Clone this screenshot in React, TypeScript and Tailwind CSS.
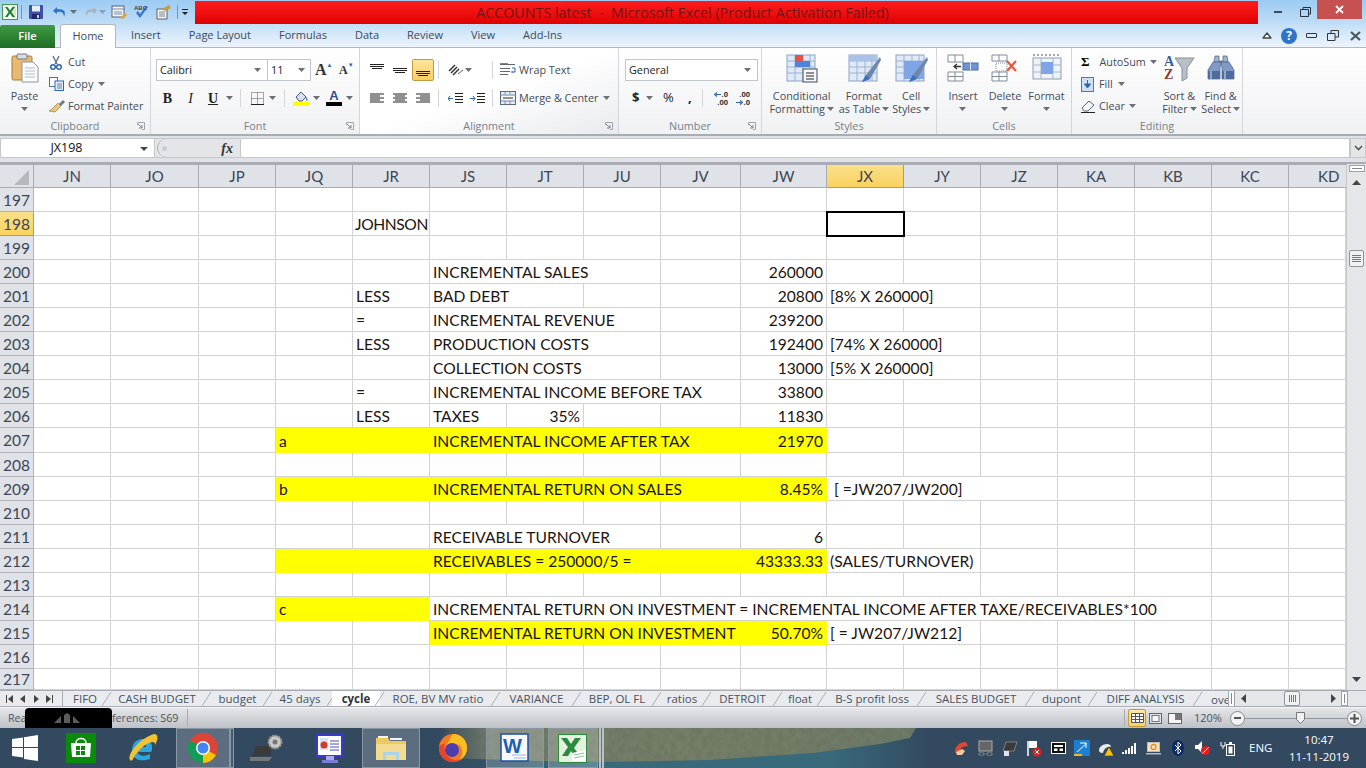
import type { ReactNode } from 'react'

type Cell = {
  col: string
  text?: string
  span?: number
  right?: boolean
  yellow?: boolean
  tight?: boolean
}

const columns = ['JN', 'JO', 'JP', 'JQ', 'JR', 'JS', 'JT', 'JU', 'JV', 'JW', 'JX', 'JY', 'JZ', 'KA', 'KB', 'KC', 'KD']
const gridCols =
  'grid grid-cols-[34px_77px_88px_77px_77px_77px_77px_77px_77px_80px_86px_77px_77px_77px_77px_77px_77px_57px]'

const spans: Record<number, string> = {
  1: '',
  2: 'col-span-2',
  3: 'col-span-3',
  4: 'col-span-4',
  5: 'col-span-5',
  10: 'col-span-10',
}

const sheet: Record<number, Cell[]> = {
  198: [{ col: 'JR', text: 'JOHNSON', tight: true }],
  200: [
    { col: 'JS', text: 'INCREMENTAL SALES', span: 3 },
    { col: 'JW', text: '260000', right: true },
  ],
  201: [
    { col: 'JR', text: 'LESS' },
    { col: 'JS', text: 'BAD DEBT', span: 2 },
    { col: 'JW', text: '20800', right: true },
    { col: 'JX', text: '[8% X 260000]', span: 2 },
  ],
  202: [
    { col: 'JR', text: '=' },
    { col: 'JS', text: 'INCREMENTAL REVENUE', span: 3 },
    { col: 'JW', text: '239200', right: true },
  ],
  203: [
    { col: 'JR', text: 'LESS' },
    { col: 'JS', text: 'PRODUCTION COSTS', span: 3 },
    { col: 'JW', text: '192400', right: true },
    { col: 'JX', text: '[74% X 260000]', span: 2 },
  ],
  204: [
    { col: 'JS', text: 'COLLECTION COSTS', span: 3 },
    { col: 'JW', text: '13000', right: true },
    { col: 'JX', text: '[5% X 260000]', span: 2 },
  ],
  205: [
    { col: 'JR', text: '=' },
    { col: 'JS', text: 'INCREMENTAL INCOME BEFORE TAX', span: 4 },
    { col: 'JW', text: '33800', right: true },
  ],
  206: [
    { col: 'JR', text: 'LESS' },
    { col: 'JS', text: 'TAXES' },
    { col: 'JT', text: '35%', right: true },
    { col: 'JW', text: '11830', right: true },
  ],
  207: [
    { col: 'JQ', text: 'a', yellow: true },
    { col: 'JR', yellow: true },
    { col: 'JS', text: 'INCREMENTAL INCOME AFTER TAX', span: 4, yellow: true },
    { col: 'JW', text: '21970', right: true, yellow: true },
  ],
  209: [
    { col: 'JQ', text: 'b', yellow: true },
    { col: 'JR', yellow: true },
    { col: 'JS', text: 'INCREMENTAL RETURN ON SALES', span: 4, yellow: true },
    { col: 'JW', text: '8.45%', right: true, yellow: true },
    { col: 'JX', text: '\u00a0[ =JW207/JW200]', span: 3 },
  ],
  211: [
    { col: 'JS', text: 'RECEIVABLE TURNOVER', span: 3 },
    { col: 'JW', text: '6', right: true },
  ],
  212: [
    { col: 'JQ', yellow: true },
    { col: 'JR', yellow: true },
    { col: 'JS', text: 'RECEIVABLES = 250000/5 =', span: 4, yellow: true },
    { col: 'JW', text: '43333.33', right: true, yellow: true },
    { col: 'JX', text: '(SALES/TURNOVER)', span: 2 },
  ],
  214: [
    { col: 'JQ', text: 'c', yellow: true },
    { col: 'JR', yellow: true },
    { col: 'JS', text: 'INCREMENTAL RETURN ON INVESTMENT = INCREMENTAL INCOME AFTER TAXE/RECEIVABLES*100', span: 10 },
  ],
  215: [
    { col: 'JS', text: 'INCREMENTAL RETURN ON INVESTMENT', span: 4, yellow: true },
    { col: 'JW', text: '50.70%', right: true, yellow: true },
    { col: 'JX', text: '[ = JW207/JW212]', span: 2 },
  ],
}

const rowNumbers = Array.from({ length: 21 }, (_, i) => 197 + i)

const sheetTabs = [
  { name: 'FIFO', w: 'w-[44px]' },
  { name: 'CASH BUDGET', w: 'w-[100px]' },
  { name: 'budget', w: 'w-[61px]' },
  { name: '45 days', w: 'w-[64px]' },
  { name: 'cycle', w: 'w-[48px]', active: true },
  { name: 'ROE, BV MV ratio', w: 'w-[116px]' },
  { name: 'VARIANCE', w: 'w-[81px]' },
  { name: 'BEP, OL FL', w: 'w-[80px]' },
  { name: 'ratios', w: 'w-[50px]' },
  { name: 'DETROIT', w: 'w-[71px]' },
  { name: 'float', w: 'w-[44px]' },
  { name: 'B-S profit loss', w: 'w-[100px]' },
  { name: 'SALES BUDGET', w: 'w-[108px]' },
  { name: 'dupont', w: 'w-[63px]' },
  { name: 'DIFF ANALYSIS', w: 'w-[105px]' },
]

function Caret({ className = '' }: { className?: string }) {
  return (
    <svg width="7" height="4" viewBox="0 0 7 4" className={`shrink-0 ${className}`}>
      <path d="M0 0h7L3.500 4z" fill="#6a7078" />
    </svg>
  )
}

function Lines({ kind }: { kind: 'left' | 'center' | 'right' }) {
  const short = kind === 'left' ? [0, 10] : kind === 'center' ? [2, 10] : [4, 10]
  const rows = [[0, 14], short, [0, 14], short, [0, 14]]
  return (
    <svg width="14" height="11" viewBox="0 0 14 11">
      {rows.map(([x, w], i) => (
        <rect key={i} x={x} y={i * 2 + 0.5} width={w} height="1" fill="#222" />
      ))}
    </svg>
  )
}

function VAlign({ pos }: { pos: number }) {
  return (
    <svg width="14" height="14" viewBox="0 0 14 14">
      {[0, 2, 4].map((y) => (
        <rect key={y} x={y === 4 ? 2 : 0} y={pos + y} width={y === 4 ? 10 : 14} height="1" fill="#222" />
      ))}
    </svg>
  )
}

function BigButton({ icon, lines, w }: { icon: ReactNode; lines: string[]; w: string }) {
  return (
    <div className={`flex flex-col items-center pt-[3px] ${w}`}>
      <div className="flex h-[34px] items-center justify-center">{icon}</div>
      <div className="mt-[4px] text-center leading-[13px] whitespace-nowrap">
        {lines.map((line, i) => (
          <div key={line} className="flex h-[13px] items-center justify-center gap-[2px]">
            {line}
            {i === 1 && line !== '' && <Caret />}
          </div>
        ))}
        {lines[1] === '' && (
          <div className="-mt-[8px] flex justify-center">
            <Caret />
          </div>
        )}
      </div>
    </div>
  )
}

function RibbonGroup({ label, w, launcher, shaded, children }: { label: string; w: string; launcher?: boolean; shaded?: boolean; children: ReactNode }) {
  return (
    <div
      className={`flex h-full shrink-0 flex-col border-r border-[#d3d6da] ${w} ${
        shaded ? 'bg-gradient-to-br from-white via-white to-[#e9ebee]' : ''
      }`}
    >
      <div className="h-[69px] overflow-hidden">{children}</div>
      <div className="relative flex h-[17px] items-center justify-center pt-[1px] text-[#76808c]">
        {label}
        {launcher && (
          <svg width="8" height="8" viewBox="0 0 8 8" className="absolute right-[5px] top-[5px]">
            <path d="M.5 3V.5H7.500V7.500H5" fill="none" stroke="#a0a5ab" />
            <path d="M1 2l4 4M5 3v3H2" fill="none" stroke="#7f868e" />
          </svg>
        )}
      </div>
    </div>
  )
}

function ExcelIcon() {
  return (
    <svg width="16" height="16" viewBox="0 0 16 16">
      <rect x=".5" y=".5" width="15" height="15" fill="#f5faf2" stroke="#3d9a4a" />
      <rect x="10" y="2" width="4" height="12" fill="#d6ead0" />
      <path d="M3 3h2.500L8 6.500 10.500 3H13L9.300 8 13 13h-2.500L8 9.500 5.500 13H3l3.700-5z" fill="#1f7a32" />
    </svg>
  )
}

function TitleBar() {
  return (
    <div className="flex h-[24px] bg-gradient-to-b from-[#9ccbf3] to-[#c0ddf6]">
      <div className="flex w-[195px] shrink-0 items-center pl-[2px]">
        <ExcelIcon />
        <div className="ml-[3px] h-[14px] w-px bg-[#7d93a8]" />
        <svg width="16" height="16" viewBox="0 0 16 16" className="ml-[6px]">
          <rect x="1" y="1" width="14" height="14" rx="1" fill="#3f4fa8" />
          <rect x="4" y="1.500" width="8" height="6" fill="#e6ecf8" />
          <rect x="4" y="10" width="8" height="5" fill="#20286a" />
          <rect x="9" y="11" width="2" height="3" fill="#cfd6e8" />
        </svg>
        <svg width="16" height="14" viewBox="0 0 16 14" className="ml-[8px]">
          <path d="M5 2L1 6l4 3V7c4-1 7 0 7 5 2-5 1-8-7-8z" fill="#2f71c4" />
        </svg>
        <Caret className="ml-[2px]" />
        <svg width="15" height="14" viewBox="0 0 16 14" className="ml-[6px]">
          <path d="M11 2l4 4-4 3V7C7 6 4 7 4 12 2 7 3 4 11 4z" fill="#a4b3bf" />
        </svg>
        <Caret className="ml-[1px] opacity-50" />
        <svg width="17" height="16" viewBox="0 0 17 16" className="ml-[5px]">
          <rect x="1" y="2" width="12" height="11" fill="#f3f5f8" stroke="#53617a" />
          <path d="M1 5h12M3 8h8M3 10h8" stroke="#7b8ba3" />
          <path d="M9 14l5-5 2 2-4 4z" fill="#d9a43b" />
        </svg>
        <svg width="17" height="16" viewBox="0 0 17 16" className="ml-[5px]">
          <path d="M3 9l4 5 8-11-2-1-6 8-2-3z" fill="#3c76c4" />
          <text x="1" y="6" fontSize="6" fontFamily="Liberation Sans, sans-serif" fontWeight="700" fill="#444">
            ABC
          </text>
        </svg>
        <svg width="17" height="16" viewBox="0 0 17 16" className="ml-[5px]">
          <rect x="2" y="5" width="10" height="10" fill="#f4f4f0" stroke="#5b6470" />
          <path d="M4 8h6M4 10h6M4 12h6" stroke="#7c8794" />
          <path d="M7 5l7-4 2 3-6 3z" fill="#c89a3a" />
        </svg>
        <div className="ml-[5px] h-[14px] w-px bg-[#7d93a8]" />
        <svg width="8" height="8" viewBox="0 0 8 8" className="ml-[3px]">
          <path d="M1 1h6v1H1zM1 4h6L4 7z" fill="#222" />
        </svg>
      </div>
      <div className="mt-px flex h-[23px] w-[1063px] shrink-0 items-center justify-center bg-gradient-to-b from-[#ff1b1b] to-[#df0000] pr-[88px] text-[14.300px] text-[#741515]">
        <span>ACCOUNTS latest &nbsp;-&nbsp; Microsoft Excel (Product Activation Failed)</span>
      </div>
      <div className="flex flex-1 items-start">
        <div className="ml-[16px] flex h-[24px] w-[10px] items-center">
          <div className="h-[2px] w-[8px] bg-[#3d4a59]" />
        </div>
        <div className="ml-[9px] flex h-[24px] w-[24px] items-center justify-center">
          <svg width="11" height="10" viewBox="0 0 11 10">
            <path d="M3 2V.5h7.500V7H8.500M.5 2.500h8V9.500h-8z" fill="none" stroke="#27323f" />
          </svg>
        </div>
        <div className="flex h-[19px] w-[45px] items-center justify-center bg-[#c75050]">
          <svg width="9" height="9" viewBox="0 0 9 9">
            <path d="M1 1l7 7M8 1L1 8" stroke="#fff" strokeWidth="1.800" />
          </svg>
        </div>
      </div>
    </div>
  )
}

function TabRow() {
  const tabs = ['Insert', 'Page Layout', 'Formulas', 'Data', 'Review', 'View', 'Add-Ins']
  return (
    <div className="flex h-[24px] border-b border-[#b4b8bd] bg-gradient-to-b from-[#c3dff8] to-[#edf4fb] text-[#3d4a5c]">
      <div className="mt-px flex h-[23px] w-[55px] items-center justify-center rounded-t-[2px] bg-gradient-to-b from-[#3f9a43] to-[#1f6e26] font-semibold text-white">
        File
      </div>
      <div className="ml-[5px] flex h-[24px] w-[56px] items-center justify-center rounded-t-[3px] border border-b-0 border-[#b4b8bd] bg-white">
        Home
      </div>
      <div className="ml-[1px] flex">
        {tabs.map((tab) => (
          <div key={tab} className="flex items-center px-[14px]">
            {tab}
          </div>
        ))}
      </div>
      <div className="ml-auto flex items-center pr-[5px]">
        <svg width="10" height="7" viewBox="0 0 10 7">
          <path d="M1 6h8L5 1z" fill="#fff" stroke="#444" strokeWidth="1.300" strokeLinejoin="round" />
        </svg>
        <div className="ml-[9px] flex h-[16px] w-[16px] items-center justify-center rounded-full bg-[#2f74c9] text-[12px] font-bold text-white">
          ?
        </div>
        <div className="ml-[9px] h-[5px] w-[11px] rounded-[1px] border border-[#333]" />
        <svg width="12" height="11" viewBox="0 0 12 11" className="ml-[10px]">
          <path d="M4 3V.5h7.500V7H8M.5 3.500h7.500V10.500H.5z" fill="none" stroke="#333" />
        </svg>
        <svg width="11" height="10" viewBox="0 0 11 10" className="ml-[11px]">
          <path d="M1 1l9 8M10 1L1 9" stroke="#4a5663" strokeWidth="2.200" />
        </svg>
      </div>
    </div>
  )
}

function ClipboardGroup() {
  return (
    <RibbonGroup label="Clipboard" w="w-[151px]" launcher>
      <div className="flex">
        <div className="flex w-[49px] flex-col items-center pt-[5px]">
          <svg width="28" height="30" viewBox="0 0 28 30">
            <rect x="1" y="3" width="20" height="24" rx="1.500" fill="#e8b96e" stroke="#a87a3a" />
            <rect x="6" y="1" width="10" height="5" rx="1" fill="#d9dde2" stroke="#6f7a86" />
            <path d="M11 9h11l5 5v15H11z" fill="#fbfcfd" stroke="#8a96a3" />
            <path d="M14 15h10M14 18h10M14 21h10M14 24h10" stroke="#b5bdc7" />
          </svg>
          <div className="mt-[6px] leading-[13px]">Paste</div>
          <Caret className="mt-[5px]" />
        </div>
        <div className="pt-[3px]">
          <div className="flex h-[22px] items-center gap-[5px]">
            <svg width="14" height="15" viewBox="0 0 14 15">
              <path d="M4 1l4 8M10 1L6 9" stroke="#687482" strokeWidth="1.400" />
              <circle cx="4" cy="12" r="2.300" fill="none" stroke="#2f64b1" strokeWidth="1.500" />
              <circle cx="10" cy="12" r="2.300" fill="none" stroke="#2f64b1" strokeWidth="1.500" />
            </svg>
            Cut
          </div>
          <div className="flex h-[22px] items-center gap-[4px]">
            <svg width="15" height="14" viewBox="0 0 15 14">
              <rect x=".5" y=".5" width="8" height="9" fill="#fff" stroke="#4f6f9f" />
              <rect x="6" y="4" width="8.500" height="9.500" fill="#e7effa" stroke="#2f64b1" />
              <path d="M8 7h5M8 9h5M8 11h5" stroke="#5a7fb5" />
            </svg>
            Copy <Caret className="ml-[1px]" />
          </div>
          <div className="flex h-[22px] items-center gap-[3px]">
            <svg width="16" height="14" viewBox="0 0 16 14">
              <path d="M9 4l3 3-6 6-6-1 3-2z" fill="#e6c677" stroke="#8a6f35" strokeWidth=".6" />
              <path d="M10 5l4-4 2 2-4 4z" fill="#6d7a88" />
            </svg>
            Format Painter
          </div>
        </div>
      </div>
    </RibbonGroup>
  )
}

function FontGroup() {
  return (
    <RibbonGroup label="Font" w="w-[209px]" launcher>
      <div className="flex h-[37px] items-start pl-[5px] pt-[11px]">
        <div className="flex h-[22px] w-[112px] items-center justify-between border border-[#c2c7cd] bg-white pl-[3px] pr-[6px] text-[#222]">
          Calibri <Caret />
        </div>
        <div className="flex h-[22px] w-[43px] items-center justify-between border border-l-0 border-[#c2c7cd] bg-white pl-[3px] pr-[5px] text-[#222]">
          11 <Caret />
        </div>
        <div className="ml-[4px] flex h-[22px] w-[18px] items-center font-['Liberation_Serif',serif] text-[16px] font-bold text-[#333]">
          A<span className="-mt-[10px] text-[6px] text-[#2f64b1]">▲</span>
        </div>
        <div className="ml-[6px] flex h-[22px] w-[16px] items-center font-['Liberation_Serif',serif] text-[12px] font-bold text-[#333]">
          A<span className="-mt-[9px] text-[6px] text-[#2f64b1]">▼</span>
        </div>
      </div>
      <div className="mt-[2px] flex h-[22px] items-center pl-[5px] font-['Liberation_Serif',serif] text-[14px] text-[#222]">
        <span className="w-[23px] text-center font-bold">B</span>
        <span className="w-[23px] text-center italic">I</span>
        <span className="w-[22px] text-center font-bold underline">U</span>
        <Caret className="ml-[2px]" />
        <div className="ml-[7px] h-[18px] w-px bg-[#d3d6da]" />
        <svg width="13" height="13" viewBox="0 0 13 13" className="ml-[10px]">
          <path d="M.5.5h12v12H.5zM6.500.5v12M.5 6.500h12" fill="none" stroke="#555" strokeDasharray="1 1" />
          <path d="M0 12.500h13" stroke="#222" />
        </svg>
        <Caret className="ml-[5px]" />
        <div className="ml-[8px] h-[18px] w-px bg-[#d3d6da]" />
        <svg width="16" height="15" viewBox="0 0 16 15" className="ml-[8px]">
          <path d="M3 6l5-5 5 5-4 4H6z" fill="#d7e2ee" stroke="#44586f" />
          <path d="M13 6c2 2 2 3 1 4-1-1-1-2-1-4z" fill="#2f74c9" />
          <rect y="11" width="16" height="4" fill="#ffff00" />
        </svg>
        <Caret className="ml-[4px]" />
        <div className="ml-[6px] flex w-[16px] flex-col items-center font-['Liberation_Sans',sans-serif] text-[13px] leading-[11px] font-bold text-[#2b4f8c]">
          A
          <div className="mt-[1px] h-[4px] w-[16px] bg-black" />
        </div>
        <Caret className="ml-[4px]" />
      </div>
    </RibbonGroup>
  )
}

function AlignmentGroup() {
  return (
    <RibbonGroup label="Alignment" w="w-[259px]" launcher shaded>
      <div className="flex h-[37px] items-start pl-[9px] pt-[11px]">
        <div className="flex h-[22px] w-[15px] items-center justify-center">
          <VAlign pos={1} />
        </div>
        <div className="ml-[8px] flex h-[22px] w-[15px] items-center justify-center">
          <VAlign pos={5} />
        </div>
        <div className="ml-[5px] flex h-[22px] w-[22px] items-center justify-center rounded-[2px] border border-[#c29b3e] bg-gradient-to-b from-[#fde49a] to-[#f9cf62]">
          <VAlign pos={8} />
        </div>
        <div className="ml-[4px] mt-[2px] h-[18px] w-px bg-[#d3d6da]" />
        <div className="ml-[9px] flex h-[22px] w-[25px] items-center gap-[1px]">
          <svg width="16" height="14" viewBox="0 0 16 14">
            <path d="M1 8l6-6M3 10l6-6M5 12l6-6" stroke="#333" strokeWidth="1.500" />
            <path d="M10 11l5-4" stroke="#2f64b1" />
          </svg>
          <Caret />
        </div>
        <div className="ml-[19px] mt-[2px] h-[18px] w-px bg-[#d3d6da]" />
        <div className="ml-[7px] flex h-[22px] items-center gap-[3px]">
          <svg width="16" height="14" viewBox="0 0 16 14">
            <path d="M0 1.500h15M0 5.500h10M0 8.500h10M0 11.500h8" stroke="#5f6772" />
            <path d="M12 5h3v4h-3M13 9l-2 0" fill="none" stroke="#2f64b1" />
            <path d="M0 .5h8" stroke="#b97b2e" />
          </svg>
          Wrap Text
        </div>
      </div>
      <div className="mt-[2px] flex h-[22px] items-center pl-[9px]">
        <div className="flex w-[15px] justify-center">
          <Lines kind="left" />
        </div>
        <div className="ml-[8px] flex w-[15px] justify-center">
          <Lines kind="center" />
        </div>
        <div className="ml-[8px] flex w-[15px] justify-center">
          <Lines kind="right" />
        </div>
        <div className="ml-[8px] h-[18px] w-px bg-[#d3d6da]" />
        <svg width="15" height="11" viewBox="0 0 15 11" className="ml-[9px]">
          <path d="M0 5.500h5M2 3l-2 2.500L2 8" fill="none" stroke="#2f64b1" />
          <path d="M7 .5h8M7 3.500h8M7 6.500h8M7 9.500h8" stroke="#222" />
        </svg>
        <svg width="15" height="11" viewBox="0 0 15 11" className="ml-[7px]">
          <path d="M0 5.500h5M3 3l2 2.500L3 8" fill="none" stroke="#2f64b1" />
          <path d="M7 .5h8M7 3.500h8M7 6.500h8M7 9.500h8" stroke="#222" />
        </svg>
        <div className="ml-[7px] h-[18px] w-px bg-[#d3d6da]" />
        <div className="ml-[7px] flex items-center gap-[3px] whitespace-nowrap">
          <svg width="16" height="14" viewBox="0 0 16 14">
            <rect x=".5" y=".5" width="15" height="13" fill="#e4ecf6" stroke="#5a6b80" />
            <path d="M.5 4h15M.5 10h15M5 .5v3M10 .5v3M5 10v3M10 10v3" stroke="#7d90a8" />
            <rect x="2" y="5" width="12" height="4" fill="#fff" />
            <path d="M3 7h10" stroke="#222" />
          </svg>
          Merge &amp; Center <Caret className="ml-[2px]" />
        </div>
      </div>
    </RibbonGroup>
  )
}

function NumberGroup() {
  return (
    <RibbonGroup label="Number" w="w-[143px]" launcher>
      <div className="flex h-[37px] items-start pl-[6px] pt-[11px]">
        <div className="flex h-[22px] w-[133px] items-center justify-between border border-[#c2c7cd] bg-white pl-[3px] pr-[6px] text-[#222]">
          General <Caret />
        </div>
      </div>
      <div className="mt-[2px] flex h-[22px] items-center pl-[13px] text-[#222]">
        <span className="w-[9px] text-[13px] font-bold">$</span>
        <Caret className="ml-[5px]" />
        <span className="ml-[10px] w-[13px] text-[13px]">%</span>
        <span className="ml-[12px] w-[4px] text-[13px] font-bold">,</span>
        <div className="ml-[10px] h-[18px] w-px bg-[#d3d6da]" />
        <div className="ml-[8px] flex w-[17px] flex-col items-end text-[7.500px] leading-[8px] font-bold text-[#333]">
          <div className="flex items-center gap-[1px]">
            <svg width="7" height="5" viewBox="0 0 7 5">
              <path d="M7 2.500H2M3 .5L.5 2.500 3 4.500" fill="none" stroke="#2f64b1" strokeWidth="1.200" />
            </svg>
            .0
          </div>
          <div>.00</div>
        </div>
        <div className="ml-[5px] flex w-[17px] flex-col items-end text-[7.500px] leading-[8px] font-bold text-[#333]">
          <div>.00</div>
          <div className="flex items-center gap-[1px]">
            <svg width="7" height="5" viewBox="0 0 7 5">
              <path d="M0 2.500h5M4 .5l2.500 2L4 4.500" fill="none" stroke="#2f64b1" strokeWidth="1.200" />
            </svg>
            .0
          </div>
        </div>
      </div>
    </RibbonGroup>
  )
}

function TableIcon({ children }: { children?: ReactNode }) {
  return (
    <svg width="34" height="30" viewBox="0 0 34 30">
      <rect x="2" y="2" width="28" height="26" fill="#dfe9f7" stroke="#8ca3c4" />
      <path d="M2 8h28M2 14h28M2 20h28M10 2v26M18 2v26M25 2v26" stroke="#9db3d1" />
      {children}
    </svg>
  )
}

function StylesGroup() {
  return (
    <RibbonGroup label="Styles" w="w-[175px]">
      <div className="flex">
        <BigButton
          w="w-[80px]"
          lines={['Conditional', 'Formatting']}
          icon={
            <TableIcon>
              <rect x="10" y="2" width="8" height="12" fill="#e0544a" />
              <rect x="10" y="8" width="15" height="6" fill="#4f84d8" />
              <rect x="18" y="16" width="14" height="13" fill="#f6f8fb" stroke="#3d4b5e" />
              <path d="M21 20h8M21 23h8M21 26h8" stroke="#222" />
            </TableIcon>
          }
        />
        <BigButton
          w="w-[45px]"
          lines={['Format', 'as Table']}
          icon={
            <TableIcon>
              <rect x="2" y="2" width="28" height="6" fill="#a9c3e8" />
              <path d="M33 4L19 22l-4 7 8-3L34 7z" fill="#6f87a8" />
              <path d="M19 22l-4 7 8-3z" fill="#3a6fc2" />
            </TableIcon>
          }
        />
        <BigButton
          w="w-[50px]"
          lines={['Cell', 'Styles']}
          icon={
            <TableIcon>
              <rect x="10" y="8" width="20" height="18" fill="#7fa5e6" />
              <path d="M33 4L19 22l-4 7 8-3L34 7z" fill="#6f87a8" />
              <path d="M19 22l-4 7 8-3z" fill="#3a6fc2" />
            </TableIcon>
          }
        />
      </div>
    </RibbonGroup>
  )
}

function CellsGroup() {
  return (
    <RibbonGroup label="Cells" w="w-[135px]">
      <div className="flex pl-[5px]">
        <BigButton
          w="w-[42px]"
          lines={['Insert', '']}
          icon={
            <svg width="32" height="30" viewBox="0 0 32 30">
              <path d="M1 2h15v7H1zM1 9h0M1 19h15v9H1zM8 2v7M1 23.500h15M8 19v9" fill="#fff" stroke="#7e8c9e" />
              <rect x="16" y="10" width="15" height="7" fill="#6f94d6" stroke="#456ea8" />
              <path d="M23.500 10v7" stroke="#dce6f6" />
              <path d="M14 13.500H7M10 11l-3 2.500L10 16" fill="none" stroke="#333" strokeWidth="1.300" />
            </svg>
          }
        />
        <BigButton
          w="w-[42px]"
          lines={['Delete', '']}
          icon={
            <svg width="28" height="30" viewBox="0 0 28 30">
              <path d="M1 2h15v6H1zM1 19h15v9H1zM8 2v6M1 23.500h15M8 19v9" fill="#fff" stroke="#7e8c9e" />
              <rect x="5" y="10" width="11" height="8" fill="none" stroke="#7e8c9e" strokeDasharray="1 1" />
              <path d="M16 8l9 10M25 8l-9 10" stroke="#e8573f" strokeWidth="2.200" />
            </svg>
          }
        />
        <BigButton
          w="w-[41px]"
          lines={['Format', '']}
          icon={
            <svg width="32" height="30" viewBox="0 0 32 30">
              <path d="M2 2h28" stroke="#555" strokeDasharray="2 2" />
              <rect x="2" y="5" width="28" height="21" fill="#eef3fa" stroke="#8f9db0" />
              <path d="M2 12h28M2 19h28M10 5v21M22 5v21" stroke="#a8b5c5" />
              <rect x="10" y="9" width="12" height="12" fill="#7fa5e6" />
            </svg>
          }
        />
      </div>
    </RibbonGroup>
  )
}

function EditingGroup() {
  return (
    <RibbonGroup label="Editing" w="w-[171px]">
      <div className="flex">
        <div className="w-[88px] pl-[9px] pt-[3px]">
          <div className="flex h-[22px] items-center gap-[10px]">
            <span className="font-['Liberation_Serif',serif] text-[13px] font-bold text-black">Σ</span>
            <span className="flex items-center gap-[4px] whitespace-nowrap">
              AutoSum <Caret />
            </span>
          </div>
          <div className="flex h-[22px] items-center gap-[5px]">
            <svg width="13" height="15" viewBox="0 0 13 15">
              <rect x=".5" y=".5" width="12" height="14" fill="#cfe0f5" stroke="#4c78b5" />
              <path d="M6.500 3v5M3.500 7h6l-3 4z" fill="#2f64b1" stroke="#2f64b1" />
            </svg>
            Fill <Caret />
          </div>
          <div className="flex h-[22px] items-center gap-[4px]">
            <svg width="14" height="13" viewBox="0 0 14 13">
              <path d="M1 8l7-7 5 4-6 6H3z" fill="#f4f6f8" stroke="#5a6675" />
              <path d="M0 12.500h14" stroke="#222" />
            </svg>
            Clear <Caret />
          </div>
        </div>
        <BigButton
          w="w-[40px]"
          lines={['Sort &', 'Filter']}
          icon={
            <svg width="32" height="30" viewBox="0 0 32 30">
              <path d="M12 5h19l-7 10v10l-5 3V15z" fill="#b9bfc6" stroke="#8a9097" />
              <text x="1" y="13" fontSize="14" fontWeight="700" fontFamily="Liberation Serif, serif" fill="#3a5fa8">
                A
              </text>
              <text x="1" y="26" fontSize="14" fontWeight="700" fontFamily="Liberation Serif, serif" fill="#8a3b34">
                Z
              </text>
            </svg>
          }
        />
        <BigButton
          w="w-[43px]"
          lines={['Find &', 'Select']}
          icon={
            <svg width="28" height="28" viewBox="0 0 28 28">
              <path d="M8 2h4v5h4V2h4l1 6H7z" fill="#9db3d4" stroke="#4a5f80" strokeWidth=".7" />
              <path d="M6 8h8l-1 6v11H1v-9zM22 8h-8l1 6v11h12v-9z" fill="#7f9ac4" stroke="#4a5f80" strokeWidth=".7" />
              <rect x="1" y="17" width="12" height="8" fill="#4f6c9c" />
              <rect x="15" y="17" width="12" height="8" fill="#4f6c9c" />
              <path d="M4 17v8M18 17v8" stroke="#a9bddb" strokeWidth="1.500" />
            </svg>
          }
        />
      </div>
    </RibbonGroup>
  )
}

function Ribbon() {
  return (
    <div className="flex h-[88px] border-b-2 border-[#a9adb3] bg-gradient-to-b from-white to-[#f0f1f3] text-[10.800px]">
      <ClipboardGroup />
      <FontGroup />
      <AlignmentGroup />
      <NumberGroup />
      <StylesGroup />
      <CellsGroup />
      <EditingGroup />
    </div>
  )
}

function FormulaBar() {
  return (
    <div className="flex h-[28px] flex-col border-b-2 border-[#a9adb3] bg-[#dfe2e6]">
      <div className="mt-[2px] flex h-[20px] bg-white">
        <div className="relative flex w-[155px] items-center justify-center border border-[#c4c8cd] pr-[22px] text-[12.500px] text-[#111]">
          JX198
          <svg width="8" height="4" viewBox="0 0 8 4" className="absolute right-[6px] top-[8px]">
            <path d="M0 0h8L4 4z" fill="#444" />
          </svg>
        </div>
        <div className="flex w-[85px] items-center justify-between border-y border-[#c4c8cd] bg-[#e3e5e8] pl-[2px] pr-[7px]">
          <div className="flex h-[18px] w-[14px] items-center justify-center rounded-l-full border-l border-[#a9adb3]">
            <div className="h-[5px] w-[5px] rounded-full bg-[#c8ccd1]" />
          </div>
          <span className="font-['Liberation_Serif',serif] text-[14px] font-bold text-[#333] italic">fx</span>
        </div>
        <div className="flex-1 border border-[#c4c8cd]" />
        <div className="flex w-[16px] items-center justify-center border border-[#c4c8cd] bg-[#e3e5e8]">
          <svg width="9" height="6" viewBox="0 0 9 6">
            <path d="M1 1l3.500 3.500L8 1" fill="none" stroke="#555" strokeWidth="1.600" />
          </svg>
        </div>
      </div>
    </div>
  )
}

function SheetRow({ row }: { row: number }) {
  const cells = sheet[row] ?? []
  const out: ReactNode[] = []
  const selectedRow = row === 198
  let i = 0
  while (i < columns.length) {
    const col = columns[i]
    const cell = cells.find((c) => c.col === col)
    const span = cell?.span ?? 1
    const selected = selectedRow && col === 'JX'
    out.push(
      <div
        key={col}
        className={`flex items-center whitespace-nowrap ${spans[span]} ${
          cell?.yellow ? 'bg-[#ffff00] pr-[4px]' : 'border-r border-b border-[#d4d4d4] pr-[3px]'
        } ${cell?.right ? 'justify-end' : ''} ${cell?.tight ? 'pl-[2px] tracking-[-0.4px]' : 'pl-[3px]'} ${
          selected ? 'relative z-10 outline-2 -outline-offset-1 outline-black' : ''
        }`}
      >
        {cell?.text}
      </div>,
    )
    i += span
  }
  return (
    <div className={`${gridCols} ${row === 207 ? 'h-[25px]' : row === 217 ? 'h-[21px]' : 'h-[24px]'}`}>
      <div
        className={`flex items-center justify-center border-r border-b text-[15.500px] text-[#3c4656] ${
          selectedRow
            ? 'border-[#c29b3e] bg-gradient-to-b from-[#fbe08a] to-[#f9d25e]'
            : 'border-[#b0b4ba] bg-[#dfe2e7]'
        }`}
      >
        {row}
      </div>
      {out}
    </div>
  )
}

function Grid() {
  return (
    <div className="flex h-[526px] font-['Lato',sans-serif] text-[15.600px] leading-[18px] text-[#1c1410]">
      <div className="w-[1346px] overflow-hidden">
        <div className={`${gridCols} h-[24px] border-t border-[#a9adb3] text-[15px] text-[#3c4656]`}>
          <div className="flex items-end justify-end border-r border-b border-[#a9adb3] bg-[#dfe2e7] p-[1px]">
            <svg width="15" height="15" viewBox="0 0 15 15" className="mb-[1px] mr-[3px]">
              <path d="M15 0v15H0z" fill="#b5b9be" />
            </svg>
          </div>
          {columns.map((col) => (
            <div
              key={col}
              className={`flex items-center border-r border-b ${
                col === 'KD' ? 'justify-start border-r-0 pl-[29px]' : 'justify-center'
              } ${
                col === 'JX'
                  ? 'border-[#c29b3e] bg-gradient-to-b from-[#fbe08a] to-[#f9d25e]'
                  : 'border-[#a9adb3] bg-[#dfe2e7]'
              }`}
            >
              {col}
            </div>
          ))}
        </div>
        {rowNumbers.map((row) => (
          <SheetRow key={row} row={row} />
        ))}
      </div>
      <div className="flex w-[20px] flex-col items-center border-l border-[#c4c8cd] bg-[#e4e6ea]">
        <div className="mt-px flex h-[7px] w-[16px] items-center justify-center border border-[#9aa0a7] bg-white">
          <div className="h-px w-[10px] bg-[#888]" />
        </div>
        <svg width="9" height="5" viewBox="0 0 9 5" className="mt-[8px]">
          <path d="M0 5h9L4.500 0z" fill="#444" />
        </svg>
        <div className="mt-[65px] flex h-[17px] w-[15px] flex-col justify-center gap-[1px] rounded-[2px] border border-[#8f959c] bg-[#eff1f3] px-[2px]">
          {[0, 1, 2, 3].map((n) => (
            <div key={n} className="h-px bg-[#777]" />
          ))}
        </div>
        <svg width="9" height="5" viewBox="0 0 9 5" className="mb-[8px] mt-auto">
          <path d="M0 0h9L4.500 5z" fill="#444" />
        </svg>
      </div>
    </div>
  )
}

function SheetTabs() {
  return (
    <div className="flex h-[17px] border-y border-[#a9adb3] bg-[#e9ebef] text-[11.500px] text-[#48525e]">
      <div className="flex w-[63px] shrink-0 items-center gap-[6px] border-r border-[#a9adb3] pl-[6px] text-[#444]">
        <svg width="7" height="8" viewBox="0 0 7 8">
          <path d="M0 0h1v8H0zM7 0v8L2 4z" fill="#444" />
        </svg>
        <svg width="6" height="8" viewBox="0 0 6 8" className="ml-[1px]">
          <path d="M5 0v8L0 4z" fill="#444" />
        </svg>
        <svg width="6" height="8" viewBox="0 0 6 8" className="ml-[2px]">
          <path d="M0 0v8l5-4z" fill="#444" />
        </svg>
        <svg width="7" height="8" viewBox="0 0 7 8">
          <path d="M6 0h1v8H6zM0 0v8l5-4z" fill="#444" />
        </svg>
      </div>
      {sheetTabs.map((tab) => (
        <div
          key={tab.name}
          className={`relative flex shrink-0 items-center justify-center whitespace-nowrap ${tab.w} ${
            tab.active ? 'bg-white font-bold text-[#333]' : ''
          }`}
        >
          {tab.name}
          <svg width="10" height="15" viewBox="0 0 10 15" className="absolute right-[-5px] top-0">
            <path d="M0 15L9 1" stroke="#a9adb3" />
          </svg>
        </div>
      ))}
      <div className="w-[30px] shrink-0 overflow-hidden whitespace-nowrap pl-[13px]">ove</div>
      <div className="flex flex-1 items-center border-l border-[#a9adb3] bg-[#e4e6ea]">
        <div className="flex h-[15px] w-[6px] items-center justify-center border-r border-[#9aa0a7] bg-white">
          <div className="h-[11px] w-px bg-[#888]" />
        </div>
        <svg width="5" height="9" viewBox="0 0 5 9" className="ml-[6px]">
          <path d="M5 0v9L0 4.500z" fill="#444" />
        </svg>
        <div className="ml-[38px] flex h-[15px] w-[16px] items-center justify-center gap-[1px] rounded-[2px] border border-[#8f959c] bg-[#eff1f3]">
          {[0, 1, 2, 3].map((n) => (
            <div key={n} className="h-[7px] w-px bg-[#777]" />
          ))}
        </div>
        <svg width="5" height="9" viewBox="0 0 5 9" className="ml-[31px]">
          <path d="M0 0v9l5-4.500z" fill="#444" />
        </svg>
        <div className="ml-[5px] flex h-[15px] w-[7px] items-center justify-center border border-[#9aa0a7] bg-white">
          <div className="h-[9px] w-px bg-[#888]" />
        </div>
      </div>
    </div>
  )
}

function StatusBar() {
  return (
    <div className="flex h-[21px] items-center border-t border-[#f3f4f6] bg-gradient-to-b from-[#e4e6e9] to-[#bec1c6] text-[10.700px] text-[#4c5560]">
      <span className="ml-[8px] w-[17px]">Rea</span>
      <div className="flex h-[20px] w-[87px] items-center justify-center gap-[2px] rounded-t-[4px] bg-black">
        <svg width="30" height="10" viewBox="0 0 30 10">
          <path d="M0 10L7 3v7zM10 10V2l3-2 3 2v8zM19 3l7 7h-7z" fill="#5c5c5c" />
        </svg>
      </div>
      <span>ferences: S69</span>
      <div className="ml-[9px] h-[18px] w-px bg-[#a9adb3]" />
      <div className="ml-auto flex items-center">
        <div className="mr-[3px] h-[18px] w-px bg-[#a9adb3]" />
        <div className="flex h-[18px] w-[18px] items-center justify-center rounded-[2px] border border-[#c29b3e] bg-gradient-to-b from-[#fde9ab] to-[#f9d25e]">
          <svg width="13" height="10" viewBox="0 0 13 10">
            <path d="M.5.5h12v9H.5zM.5 3.500h12M.5 6.500h12M4.500.5v9M8.500.5v9" fill="#fff" stroke="#555" />
          </svg>
        </div>
        <svg width="13" height="11" viewBox="0 0 13 11" className="ml-[3px]">
          <rect x=".5" y=".5" width="12" height="10" fill="#dfe2e6" stroke="#666" />
          <rect x="3" y="2.500" width="7" height="6" fill="#f4f5f7" stroke="#777" />
        </svg>
        <svg width="14" height="11" viewBox="0 0 14 11" className="ml-[6px]">
          <rect x=".5" y=".5" width="13" height="10" fill="#f4f5f7" stroke="#666" />
          <rect x="7" y="1" width="6" height="6" fill="#777" />
        </svg>
        <span className="ml-[12px] w-[28px] text-[11px]">120%</span>
        <div className="ml-[8px] flex h-[15px] w-[15px] items-center justify-center rounded-full border border-[#888] bg-[#f2f3f5]">
          <div className="h-[2px] w-[7px] bg-[#555]" />
        </div>
        <div className="relative h-px w-[102px] bg-[#8f959c]">
          <svg width="9" height="12" viewBox="0 0 9 12" className="absolute left-[51px] top-[-6px]">
            <path d="M.5.5h8v7L4.500 11.500.5 7.500z" fill="#eff1f3" stroke="#777" />
          </svg>
        </div>
        <div className="mr-[4px] flex h-[15px] w-[15px] items-center justify-center rounded-full border border-[#888] bg-[#f2f3f5]">
          <svg width="9" height="9" viewBox="0 0 9 9">
            <path d="M0 4.500h9M4.500 0v9" stroke="#555" strokeWidth="2" />
          </svg>
        </div>
      </div>
    </div>
  )
}

function TaskButton({ w, active, children }: { w: string; active?: boolean; children: ReactNode }) {
  return (
    <div
      className={`flex h-[40px] shrink-0 items-center justify-center ${w} ${
        active ? 'border border-[#8a98a4] bg-white/20' : ''
      }`}
    >
      {children}
    </div>
  )
}

function Taskbar() {
  return (
    <div className="relative flex h-[40px] items-center bg-[#33495f] text-white">
      <svg width="490" height="40" viewBox="0 0 490 40" className="absolute left-[440px] top-0">
        <defs>
          <linearGradient id="sea" x1="0" y1="0" x2="1" y2="0">
            <stop offset="0" stopColor="#33495f" />
            <stop offset="0.3" stopColor="#376a7c" />
            <stop offset="0.8" stopColor="#39697a" />
            <stop offset="1" stopColor="#33495f" />
          </linearGradient>
          <linearGradient id="land" x1="0" y1="0" x2="1" y2="0">
            <stop offset="0" stopColor="#33495f" />
            <stop offset="0.1" stopColor="#6e7a6c" />
            <stop offset="0.5" stopColor="#757f68" />
            <stop offset="0.96" stopColor="#6e7b68" />
            <stop offset="1" stopColor="#4a6066" />
          </linearGradient>
          <filter id="rough">
            <feTurbulence type="fractalNoise" baseFrequency="0.16" numOctaves="2" seed="4" />
            <feColorMatrix values="0 0 0 0 0.12  0 0 0 0 0.13  0 0 0 0 0.08  0 0 0 0.7 -0.2" />
          </filter>
        </defs>
        <rect width="490" height="40" fill="url(#land)" />
        <rect x="50" width="440" height="40" filter="url(#rough)" />
        <path d="M0 30L100 33 166 34 270 32 373 25 440 16 470 10 476 0H490V40H0z" fill="url(#sea)" />
      </svg>

      <div className="relative flex w-[600px] shrink-0 items-center">
        <TaskButton w="w-[50px]">
          <svg width="26" height="26" viewBox="0 0 26 26">
            <path d="M0 4l11-1.500V12H0zM12 2.300L26 0v12H12zM0 13h11v9.500L0 21zM12 13h14v13l-14-2z" fill="#fff" />
          </svg>
        </TaskButton>
        <TaskButton w="w-[62px]">
          <svg width="30" height="30" viewBox="0 0 30 30">
            <rect width="30" height="30" fill="#0a8a0a" />
            <path d="M5 10h20l-1 14H6z" fill="#fff" />
            <path d="M10 10c0-6 10-6 10 0" fill="none" stroke="#fff" strokeWidth="1.500" />
            <path d="M10 13h4v4h-4zM15 13h4v4h-4zM10 18h4v4h-4zM15 18h4v4h-4z" fill="#0a8a0a" />
          </svg>
        </TaskButton>
        <TaskButton w="w-[62px]">
          <svg width="32" height="32" viewBox="0 0 32 32">
            <path d="M24 20H11c0 4 6 5 12 2v5c-9 3-18 1-18-8 0-10 7-12 11-12 6 0 10 4 9 11zM19 15c0-3-2-4-4-4s-3 1-4 4z" fill="#2aa7e0" />
            <path d="M3 28C0 22 12 7 27 2c4 0 5 4 1 11C29 6 14 12 6 27c-1 2-2 2-3 1z" fill="#f2c230" />
          </svg>
        </TaskButton>
        <div className="ml-[2px] flex">
          <TaskButton w="w-[54px]" active>
            <svg width="30" height="30" viewBox="0 0 30 30">
              <circle cx="15" cy="15" r="15" fill="#db4437" />
              <path d="M15 15L28 22A15 15 0 0 1 15 30z" fill="#f4c20d" />
              <path d="M15 15L15 30A15 15 0 0 1 2 7.500z" fill="#0f9d58" />
              <circle cx="15" cy="15" r="7" fill="#fff" />
              <circle cx="15" cy="15" r="5.500" fill="#4285f4" />
            </svg>
          </TaskButton>
          <div className="h-[40px] w-[4px] border border-[#8a98a4] bg-white/10" />
        </div>
        <TaskButton w="w-[66px]">
          <svg width="34" height="28" viewBox="0 0 34 28">
            <path d="M6 12h16l-2 10H2z" fill="#3b3b3b" />
            <path d="M0 23h22l-3 4H0z" fill="#777" />
            <circle cx="25" cy="8" r="6.500" fill="#c9c9c9" stroke="#8c8c8c" strokeWidth="2" strokeDasharray="2 1" />
            <circle cx="25" cy="8" r="2.500" fill="#777" />
          </svg>
        </TaskButton>
        <div className="ml-[15px]">
          <TaskButton w="w-[30px]">
            <svg width="28" height="31" viewBox="0 0 28 31">
              <rect x="1" y="2" width="25" height="21" fill="#fff" stroke="#3a3ad0" strokeWidth="2" />
              <rect x="4" y="5" width="8" height="12" fill="#d9e2f4" />
              <circle cx="8" cy="12" r="3.500" fill="#d83a26" />
              <path d="M14 8h9M14 11h9M14 14h9M14 17h9" stroke="#4a4ac0" />
              <rect x="10" y="23" width="8" height="4" fill="#a9a9ea" />
              <rect x="6" y="27" width="16" height="3" fill="#7b7bdb" />
            </svg>
          </TaskButton>
        </div>
        <div className="ml-[17px]">
          <TaskButton w="w-[58px]" active>
            <svg width="32" height="26" viewBox="0 0 32 26">
              <path d="M1 3h12l2 3h16v4H1z" fill="#eec960" />
              <path d="M3 2h10M15 4h12" stroke="#f4f4f4" strokeWidth="2" />
              <path d="M1 9h30v16H1z" fill="#f3dc92" />
              <path d="M8 17h16v8h-3v-5H11v5H8z" fill="#a9d4ea" />
            </svg>
          </TaskButton>
        </div>
        <div className="ml-[18px]">
          <TaskButton w="w-[30px]">
            <svg width="30" height="30" viewBox="0 0 30 30">
              <circle cx="15" cy="15" r="14" fill="#f57a1f" />
              <path d="M15 1c8 0 14 6 14 14 0 5-3 10-8 12 4-4 4-9 2-13-2-3-5-4-8-3-4 1-5 5-4 8-3-2-3-8 0-11 1-3 2-5 4-7z" fill="#fbbf24" />
              <circle cx="14" cy="17" r="7" fill="#4b3fb0" />
              <path d="M1 15c0 8 6 14 14 14 3 0 6-1 8-3-6 3-14 0-16-8-1-3-1-5 0-7-3 0-6 1-6 4z" fill="#e8432d" />
            </svg>
          </TaskButton>
        </div>
        <div className="ml-[18px]">
          <TaskButton w="w-[58px]" active>
            <svg width="30" height="30" viewBox="0 0 30 30">
              <rect x="1" y="1" width="27" height="27" fill="#f6f8fc" stroke="#1c4fa8" strokeWidth="1.500" />
              <text x="3" y="20" fontSize="20" fontWeight="700" fontFamily="Liberation Sans, sans-serif" fill="#1c5db8">
                W
              </text>
              <path d="M12 22h14M14 25h12" stroke="#9db8de" />
            </svg>
          </TaskButton>
        </div>
        <div className="ml-[4px]">
          <TaskButton w="w-[50px]" active>
            <svg width="30" height="29" viewBox="0 0 30 29">
              <rect x=".5" y=".5" width="28" height="28" fill="#e4f1de" stroke="#2a8a3e" />
              <path d="M3 4h6l4 6 4-6h6l-7 10 6 8h-6l-3-5-3 5H4l6-9z" fill="#2a8a3e" />
              <path d="M14 19l14-3v11H14z" fill="#fff" />
              <path d="M16 21l10-2M16 24l10-2" stroke="#8fc39a" />
            </svg>
          </TaskButton>
        </div>
        <div className="ml-[1px] h-[40px] w-[3px] border border-[#b9c2c8] bg-white/10" />
        <div className="ml-[1px] h-[40px] w-[3px] border border-[#b9c2c8] bg-white/10" />
      </div>

      <div className="relative ml-auto flex items-center pr-[18px]">
        <svg width="16" height="16" viewBox="0 0 16 16">
          <path d="M12 2C5 2 1 7 1 11c0 3 3 4 7 3l3-3-5-1 2-3 6-1z" fill="#e2472f" />
          <path d="M2 12l6-3 3 2-3 4H3z" fill="#f1c9a5" />
        </svg>
        <svg width="16" height="16" viewBox="0 0 16 16" className="ml-[8px]">
          <rect x="1" y="1" width="13" height="10" fill="#666" stroke="#aaa" />
          <path d="M1 13h5v2H1zM9 13h5v2H9z" fill="#222" stroke="#ddd" strokeWidth=".5" />
        </svg>
        <svg width="16" height="15" viewBox="0 0 16 15" className="ml-[8px]">
          <path d="M4 1h11l-3 9H1z" fill="#3b3b3b" stroke="#aaa" strokeWidth=".6" />
          <rect x="2" y="10" width="5" height="5" fill="#e4e0ee" />
        </svg>
        <svg width="16" height="17" viewBox="0 0 16 17" className="ml-[8px]">
          <path d="M2 1v15" stroke="#fff" strokeWidth="1.500" />
          <path d="M3 1h8v7H3z" fill="#fff" />
          <circle cx="11" cy="12" r="4.500" fill="#d82020" />
          <path d="M9 10l4 4M13 10l-4 4" stroke="#fff" />
        </svg>
        <svg width="15" height="12" viewBox="0 0 15 12" className="ml-[9px]">
          <rect x=".5" y=".5" width="14" height="11" fill="#111" stroke="#fff" />
          <rect x="3" y="3" width="9" height="2" fill="#fff" />
          <rect x="3" y="6.500" width="3.500" height="2.500" fill="#fff" />
          <rect x="8.500" y="6.500" width="3.500" height="2.500" fill="#fff" />
        </svg>
        <svg width="16" height="16" viewBox="0 0 16 16" className="ml-[8px]">
          <rect width="16" height="16" fill="#1d7fd1" />
          <path d="M3 12L13 3M6 3h6v5" fill="none" stroke="#fff" />
          <path d="M0 14h8v2H0z" fill="#f0b92d" />
        </svg>
        <svg width="17" height="15" viewBox="0 0 17 15" className="ml-[8px]">
          <path d="M1 9c0-3 4-6 8-6 2 0 4 1 4 3-3-1-7 1-8 6-3 0-4-1-4-3z" fill="#e8eaec" />
          <path d="M11 6l5 9H6z" fill="#f4c20d" stroke="#222" strokeWidth=".5" />
        </svg>
        <svg width="15" height="11" viewBox="0 0 15 11" className="ml-[7px]">
          <path d="M0 9h2v2H0zM3 7h2v4H3zM6 5h2v6H6zM9 3h2v8H9zM12 0h2v11h-2z" fill="#fff" />
        </svg>
        <svg width="15" height="13" viewBox="0 0 15 13" className="ml-[9px]">
          <rect x="1.500" y=".5" width="12" height="9" fill="#f6e3c2" stroke="#bbb" />
          <circle cx="7.500" cy="5" r="2.500" fill="none" stroke="#e88a20" strokeWidth="1.300" />
          <path d="M0 11h15v1.500H0z" fill="#bbb" />
        </svg>
        <svg width="12" height="16" viewBox="0 0 12 16" className="ml-[11px]">
          <ellipse cx="6" cy="8" rx="6" ry="8" fill="#0d2a66" />
          <path d="M3 5l6 6-3 3V2l3 3-6 6" fill="none" stroke="#fff" />
        </svg>
        <svg width="15" height="14" viewBox="0 0 15 14" className="ml-[11px]">
          <path d="M0 4h3l4-4v12L3 8H0z" fill="#fff" />
          <circle cx="10.500" cy="9.500" r="4.500" fill="#e01e1e" />
          <path d="M7.500 12.500l6-6" stroke="#fff" />
        </svg>
        <svg width="15" height="15" viewBox="0 0 15 15" className="ml-[10px]">
          <path d="M1 1v4h4V1M3 5v3" fill="none" stroke="#fff" />
          <rect x="6.500" y="3.500" width="8" height="11" fill="none" stroke="#fff" />
          <rect x="9" y="1" width="3" height="2" fill="#fff" />
          <rect x="8.500" y="5.500" width="4" height="7" fill="#fff" />
        </svg>
        <span className="ml-[14px] w-[24px] text-[11.500px]">ENG</span>
        <div className="ml-[17px] flex w-[58px] flex-col items-center text-[11.500px] leading-[17px]">
          <span>10:47</span>
          <span className="whitespace-nowrap">11-11-2019</span>
        </div>
      </div>
    </div>
  )
}

export default function App() {
  return (
    <div className="h-[768px] w-[1366px] overflow-hidden bg-white font-['Open_Sans',sans-serif] text-[11px] text-[#444c58]">
      <TitleBar />
      <TabRow />
      <Ribbon />
      <FormulaBar />
      <Grid />
      <SheetTabs />
      <StatusBar />
      <Taskbar />
    </div>
  )
}
